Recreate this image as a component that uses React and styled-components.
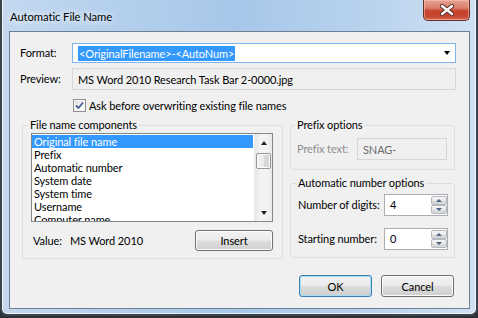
import React from 'react';
import styled, { createGlobalStyle } from 'styled-components';

const GlobalStyle = createGlobalStyle`
  html, body {
    margin: 0;
    padding: 0;
    overflow: hidden;
  }
  body {
    background: #2d3135;
    font-family: Lato, "Liberation Sans", sans-serif;
    font-size: 11px;
    letter-spacing: -0.1px;
    color: #000;
  }
`;

const Desktop = styled.div`
  width: 478px;
  height: 318px;
  overflow: hidden;
  background: #2d3135;
`;

const Window = styled.div`
  box-sizing: border-box;
  width: 478px;
  height: 316px;
  border: 2px solid #3b434c;
  border-top: none;
  border-radius: 0 0 7px 7px;
  background: linear-gradient(90deg, #c4d9f0 0%, #b3cfec 25%, #a7c7ea 50%, #b9d3ee 78%, #d0e1f4 100%);
  box-shadow: inset 1px 0 0 rgba(255, 255, 255, 0.7), inset -1px -1px 0 rgba(255, 255, 255, 0.7);
  padding: 0 6px 5px 7px;
  display: flex;
  flex-direction: column;
  overflow: hidden;
`;

const TitleBar = styled.div`
  flex: none;
  height: 31px;
  display: flex;
  align-items: flex-start;
`;

const Title = styled.div`
  padding: 9px 0 0 1px;
  line-height: 16px;
  font-size: 11.3px;
  text-shadow: 0 0 6px rgba(255, 255, 255, 0.95), 0 0 10px rgba(255, 255, 255, 0.8);
`;

const CloseButton = styled.div`
  margin-left: auto;
  box-sizing: border-box;
  width: 47px;
  height: 21px;
  border: 1px solid #6b3128;
  border-top: none;
  border-radius: 0 0 5px 5px;
  background: linear-gradient(180deg, #e7a394 0%, #d97f6b 40%, #c7402a 55%, #c44a34 85%, #d9735a 100%);
  box-shadow: inset 0 0 0 1px rgba(255, 200, 190, 0.5);
  display: flex;
  align-items: center;
  justify-content: center;
`;

const Client = styled.div`
  flex: 1;
  min-height: 0;
  border: 1px solid #6f7f93;
  background: #f0f0f0;
  padding: 11px 0 0 10px;
  display: flex;
  flex-direction: column;
`;

const FormGrid = styled.div`
  display: grid;
  grid-template-columns: 52px 384px;
  row-gap: 5px;
  align-items: center;
`;

const Label = styled.span`
  color: ${p => (p.disabled ? '#8d8d8d' : '#000')};
  white-space: nowrap;
  line-height: 16px;
`;

const Combo = styled.div`
  box-sizing: border-box;
  height: 20px;
  border: 1px solid #7eb4ea;
  background: #fff;
  padding-left: 5px;
  padding-right: 5px;
  display: flex;
  align-items: center;
`;

const Selection = styled.span`
  background: #3399ff;
  color: #fff;
  line-height: 15px;
  padding: 0 1px;
`;

const DropArrow = styled.span`
  margin-left: auto;
  width: 0;
  height: 0;
  border-left: 3.5px solid transparent;
  border-right: 3.5px solid transparent;
  border-top: 4px solid #000;
`;

const TextBox = styled.div`
  box-sizing: border-box;
  height: ${p => p.h || 22}px;
  width: ${p => (p.w ? `${p.w}px` : 'auto')};
  border: 1px solid ${p => (p.readOnly ? '#d6d6d6' : '#abadb3')};
  background: ${p => (p.readOnly ? '#f0f0f0' : '#fff')};
  color: ${p => (p.dim ? '#6d6d6d' : '#000')};
  padding-left: 5px;
  display: flex;
  align-items: center;
  margin-left: ${p => (p.pushRight ? 'auto' : '0')};
  white-space: nowrap;
`;

const CheckRow = styled.label`
  margin: 7px 0 0 53px;
  height: 16px;
  display: flex;
  align-items: center;
  gap: 3px;
`;

const CheckBox = styled.span`
  box-sizing: border-box;
  width: 13px;
  height: 13px;
  border: 1px solid #8e8f8f;
  background: linear-gradient(135deg, #dcdcdc 0%, #f4f4f4 60%, #ffffff 100%);
  box-shadow: inset 0 0 0 1px #f4f4f4;
  display: flex;
  align-items: center;
  justify-content: center;
`;

const LowerGrid = styled.div`
  margin: 4px 0 0 2px;
  display: grid;
  grid-template-columns: 261px 165px;
  column-gap: 7px;
  align-items: start;
`;

const RightColumn = styled.div`
  display: flex;
  flex-direction: column;
  gap: 5px;
`;

const Group = styled.fieldset`
  margin: 0;
  min-width: 0;
  border: 1px solid #d5dfe5;
  border-radius: 3px;
  padding: 0 ${p => p.pr || 7}px ${p => p.pb || 7}px ${p => p.pl || 6}px;
  display: flex;
  flex-direction: column;
`;

const Legend = styled.legend`
  padding: 0 2px;
  margin-left: ${p => p.ml || -2}px;
  line-height: 16px;
  white-space: nowrap;
`;

const ListBox = styled.div`
  box-sizing: border-box;
  width: 242px;
  height: 89px;
  border: 1px solid #828790;
  background: #fff;
  display: flex;
`;

const Items = styled.div`
  flex: 1;
  overflow: hidden;
  padding-top: 1px;
`;

const Item = styled.div`
  height: 13px;
  line-height: 13px;
  padding-left: 2px;
  white-space: nowrap;
  background: ${p => (p.selected ? '#3399ff' : 'transparent')};
  color: ${p => (p.selected ? '#fff' : '#000')};
`;

const ScrollBar = styled.div`
  width: 17px;
  margin-left: 1px;
  background: linear-gradient(90deg, #e6e6e6 0%, #f3f3f3 30%, #f3f3f3 70%, #e9e9e9 100%);
  border-left: 1px solid #eaeaea;
  display: flex;
  flex-direction: column;
  align-items: center;
`;

const ArrowCell = styled.div`
  height: 17px;
  width: 100%;
  display: flex;
  align-items: center;
  justify-content: center;
  margin-top: ${p => (p.bottom ? 'auto' : '0')};
`;

const Tri = styled.span`
  width: 0;
  height: 0;
  border-left: ${p => p.size || 3.5}px solid transparent;
  border-right: ${p => p.size || 3.5}px solid transparent;
  ${p => (p.up ? 'border-bottom' : 'border-top')}: ${p => p.h || 4}px solid ${p => p.color || '#222'};
`;

const Thumb = styled.div`
  box-sizing: border-box;
  margin-top: 2px;
  width: 15px;
  height: 16px;
  border: 1px solid #979797;
  border-radius: 2px;
  background: linear-gradient(90deg, #f3f3f3 0%, #ebebeb 50%, #d9d9d9 51%, #d3d3d3 100%);
  box-shadow: inset 0 0 0 1px #fbfbfb;
`;

const ValueRow = styled.div`
  margin-top: 8px;
  display: flex;
  align-items: center;
`;

const ValueLabel = styled.span`
  margin-left: 2px;
  width: 37px;
`;

const Button = styled.button`
  box-sizing: border-box;
  width: ${p => p.w || 73}px;
  height: ${p => p.h || 22}px;
  margin-left: ${p => (p.pushRight ? 'auto' : '0')};
  border: 1px solid ${p => (p.primary ? '#3c7fb1' : '#707070')};
  border-radius: 3px;
  background: linear-gradient(180deg, #f2f2f2 0%, #ebebeb 48%, #dddddd 52%, #cfcfcf 100%);
  box-shadow: inset 0 0 0 1px ${p => (p.primary ? '#a3dcf6' : '#fcfcfc')};
  font-family: inherit;
  font-size: 11px;
  letter-spacing: -0.1px;
  color: #000;
  padding: 0;
`;

const FieldRow = styled.div`
  display: flex;
  align-items: center;
  margin-top: ${p => p.mt || 0}px;
`;

const Spin = styled.div`
  box-sizing: border-box;
  width: 64px;
  height: 22px;
  margin-left: auto;
  border: 1px solid #abadb3;
  background: #fff;
  display: flex;
`;

const SpinText = styled.span`
  flex: 1;
  padding-left: 5px;
  line-height: 19px;
`;

const SpinButtons = styled.div`
  width: 16px;
  display: flex;
  flex-direction: column;
  padding: 1px 0;
`;

const SpinButton = styled.div`
  box-sizing: border-box;
  flex: 1;
  border: 1px solid #b5b9c0;
  border-radius: 2px;
  background: linear-gradient(180deg, #f6f6f6 0%, #e9e9e9 50%, #dcdcdc 51%, #d6d6d6 100%);
  display: flex;
  align-items: center;
  justify-content: center;
`;

const ButtonBar = styled.div`
  margin-top: 16px;
  padding-right: 15px;
  display: flex;
  justify-content: flex-end;
  gap: 9px;
`;

const components = [
  'Original file name',
  'Prefix',
  'Automatic number',
  'System date',
  'System time',
  'Username',
  'Computer name',
];

const CloseGlyph = () => (
  <svg width="16" height="12" viewBox="0 0 16 12">
    <path d="M3 2 L13 10 M13 2 L3 10" stroke="#5a2a24" strokeWidth="4.2" strokeLinecap="round" />
    <path d="M3 2 L13 10 M13 2 L3 10" stroke="#ffffff" strokeWidth="2.4" strokeLinecap="round" />
  </svg>
);

const CheckMark = () => (
  <svg width="9" height="9" viewBox="0 0 9 9">
    <path d="M1 4.5 L3.5 7 L8 1.5" fill="none" stroke="#4a5f97" strokeWidth="1.8" />
  </svg>
);

const Spinner = ({ value }) => (
  <Spin>
    <SpinText>{value}</SpinText>
    <SpinButtons>
      <SpinButton><Tri up size={3} h={3} color="#4d6185" /></SpinButton>
      <SpinButton><Tri size={3} h={3} color="#4d6185" /></SpinButton>
    </SpinButtons>
  </Spin>
);

export default function App() {
  return (
    <Desktop>
      <GlobalStyle />
      <Window>
        <TitleBar>
          <Title>Automatic File Name</Title>
          <CloseButton><CloseGlyph /></CloseButton>
        </TitleBar>
        <Client>
          <FormGrid>
            <Label>Format:</Label>
            <Combo>
              <Selection>&lt;OriginalFilename&gt;-&lt;AutoNum&gt;</Selection>
              <DropArrow />
            </Combo>
            <Label>Preview:</Label>
            <TextBox readOnly>MS Word 2010 Research Task Bar 2-0000.jpg</TextBox>
          </FormGrid>
          <CheckRow>
            <CheckBox><CheckMark /></CheckBox>
            <span>Ask before overwriting existing file names</span>
          </CheckRow>
          <LowerGrid>
            <Group pl={8} pr={9} pb={7}>
              <Legend ml={-3}>File name components</Legend>
              <ListBox>
                <Items>
                  {components.map((c, i) => (
                    <Item key={c} selected={i === 0}>{c}</Item>
                  ))}
                </Items>
                <ScrollBar>
                  <ArrowCell><Tri up /></ArrowCell>
                  <Thumb />
                  <ArrowCell bottom><Tri /></ArrowCell>
                </ScrollBar>
              </ListBox>
              <ValueRow>
                <ValueLabel>Value:</ValueLabel>
                <span>MS Word 2010</span>
                <Button w={78} h={21} pushRight>Insert</Button>
              </ValueRow>
            </Group>
            <RightColumn>
              <Group pl={6} pr={7} pb={9}>
                <Legend>Prefix options</Legend>
                <FieldRow mt={5}>
                  <Label disabled>Prefix text:</Label>
                  <TextBox readOnly dim w={90} pushRight>SNAG-</TextBox>
                </FieldRow>
              </Group>
              <Group pl={7} pr={6} pb={7}>
                <Legend>Automatic number options</Legend>
                <FieldRow mt={3}>
                  <Label>Number of digits:</Label>
                  <Spinner value="4" />
                </FieldRow>
                <FieldRow mt={12}>
                  <Label>Starting number:</Label>
                  <Spinner value="0" />
                </FieldRow>
              </Group>
            </RightColumn>
          </LowerGrid>
          <ButtonBar>
            <Button primary>OK</Button>
            <Button>Cancel</Button>
          </ButtonBar>
        </Client>
      </Window>
    </Desktop>
  );
}
